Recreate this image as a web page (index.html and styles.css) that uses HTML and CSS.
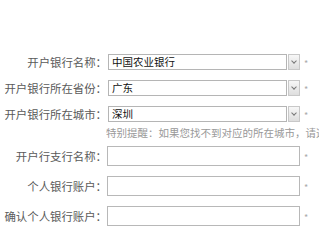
FILE: index.html
```html
<!DOCTYPE html>
<html lang="zh-CN">

<head>
    <meta charset="UTF-8">
    <meta name="viewport" content="width=device-width, initial-scale=1.0">
    <title>银行账户</title>
    <link rel="stylesheet" href="styles.css">
</head>
<body>
    <form class="bank-form">
        <div class="row">
            <label class="label">开户银行名称：</label>
            <div class="select"><span class="select-text">中国农业银行</span><span class="select-arrow"></span></div>
            <span class="req">*</span>
        </div>
        <div class="row">
            <label class="label">开户银行所在省份：</label>
            <div class="select"><span class="select-text">广东</span><span class="select-arrow"></span></div>
            <span class="req">*</span>
        </div>
        <div class="row">
            <label class="label">开户银行所在城市：</label>
            <div class="select"><span class="select-text">深圳</span><span class="select-arrow"></span></div>
            <span class="req">*</span>
        </div>
        <p class="note">特别提醒：如果您找不到对应的所在城市，请选择附近的城市</p>

        <div class="row row-tall">
            <label class="label">开户行支行名称：</label>
            <input class="text-input" type="text">
            <span class="req">*</span>
        </div>
        <div class="row row-tall">
            <label class="label">个人银行账户：</label>
            <input class="text-input" type="text">
            <span class="req">*</span>
        </div>
        <div class="row row-tall">
            <label class="label">确认个人银行账户：</label>
            <input class="text-input" type="text">
            <span class="req">*</span>
        </div>
    </form>
</body>

</html>
```

FILE: styles.css
```css
body {
    font-family: "Noto Sans CJK SC", "Liberation Sans", sans-serif;
    background-color: #fff;
    margin: 0;
    padding: 0;
    overflow: hidden;
}

.bank-form {
    padding-top: 49px;
    width: 319px;
}

.row {
    display: flex;
    align-items: center;
    height: 26px;
}

.row-tall {
    height: 30px;
}

.label {
    width: 107px;
    flex-shrink: 0;
    text-align: right;
    font-size: 11.4px;
    color: #5a5a5a;
    white-space: nowrap;
}

.select {
    display: flex;
    width: 192px;
    height: 16px;
    margin-left: 1px;
}

.select-text {
    flex: 1;
    border: 1px solid #b5b5b5;
    font-size: 10.5px;
    line-height: 14px;
    padding-left: 3px;
    color: #111;
}

.select-arrow {
    position: relative;
    width: 10px;
    margin-left: 1px;
    border: 1px solid #c8c8c8;
    background: linear-gradient(#f7f7f7, #dedede);
}

.select-arrow::after {
    content: "";
    position: absolute;
    left: 3px;
    top: 4px;
    width: 3px;
    height: 3px;
    border-right: 1px solid #777;
    border-bottom: 1px solid #777;
    transform: rotate(45deg);
}

.req {
    margin-left: 4px;
    margin-top: 2px;
    font-size: 9px;
    color: #aaa;
}

.note {
    margin: 0 0 0 106px;
    height: 14px;
    font-size: 10.5px;
    line-height: 12px;
    color: #999;
    white-space: nowrap;
    overflow: hidden;
}

.text-input {
    width: 193px;
    height: 20px;
    box-sizing: border-box;
    margin: 0;
    padding: 0 3px;
    border: 1px solid #b8b8b8;
    background: #fff;
}
```
